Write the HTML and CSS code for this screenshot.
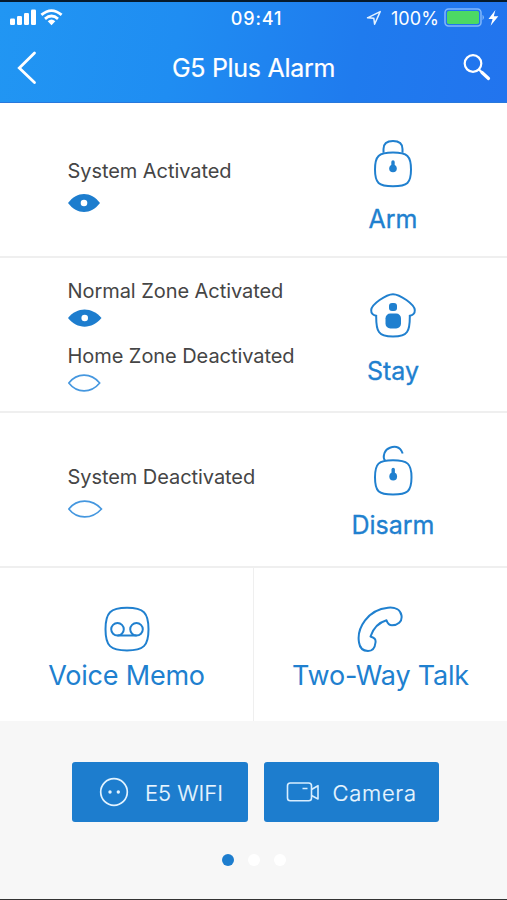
FILE: index.html
```html
<!DOCTYPE html>
<html lang="en">
<head>
<meta charset="utf-8">
<title>G5 Plus Alarm</title>
<link rel="stylesheet" href="styles.css">
</head>
<body>
<div class="app">
  <header class="header">
    <div class="status">
      <div class="status-left">
        <svg width="54" height="18" viewBox="0 0 54 18" fill="#fff">
          <rect x="0" y="9.5" width="5" height="6.5" rx="1.2"/><rect x="7" y="7" width="5" height="9" rx="1.2"/><rect x="14" y="4" width="5" height="12" rx="1.2"/><rect x="21" y="0.5" width="5" height="15.5" rx="1.2"/>
          <g fill="none" stroke="#fff" stroke-width="2.8"><path d="M31.4 5.9Q41.5 -2.7 51.6 5.9"/><path d="M35 9.9Q41.5 4.2 48 9.9"/></g>
          <path d="M37.7 12.2Q41.5 9 45.3 12.2L41.5 16.2Z"/>
        </svg>
      </div>
      <div class="time">09:41</div>
      <div class="status-right">
        <svg width="16" height="16" viewBox="0 0 16 16" fill="none" stroke="#e4f2ff" stroke-width="1.5" stroke-linejoin="round"><path d="M1.5 7.8L14.2 1.6L8.6 14.2L7.8 8.2Z"/></svg>
        <span class="percent">100%</span>
        <svg class="battery" width="42" height="20" viewBox="0 0 42 20"><rect x="1" y="1" width="36" height="17" rx="3.5" fill="none" stroke="#83b8fa" stroke-width="1.5"/><rect x="3" y="3" width="32" height="13" rx="1.8" fill="#4cd964"/><path d="M38.5 6.8Q41.5 9.5 38.5 12.2Z" fill="#83b8fa"/></svg>
        <svg width="11" height="16" viewBox="0 0 11 16" fill="#fff"><path d="M7.4 0L0.5 9H4.6L2.6 15.8L10.3 6.3H5.8Z"/></svg>
      </div>
    </div>
    <div class="nav">
      <svg class="back" width="22" height="36" viewBox="0 0 22 36" fill="none" stroke="#fff" stroke-width="2.8" stroke-linecap="round" stroke-linejoin="miter"><path d="M18.5 3L3.3 18L18.5 32.5"/></svg>
      <h1>G5 Plus Alarm</h1>
      <svg class="search" width="30" height="30" viewBox="0 0 30 30" fill="none" stroke="#fff" stroke-linecap="round"><circle cx="11" cy="10.5" r="8.3" stroke-width="2.2"/><path d="M17 16.500L20 19.500" stroke-width="2.2"/><path d="M20 19.500L26.500 25.500" stroke-width="3.200"/></svg>
    </div>
  </header>

  <section class="row">
    <div class="info">
      <div class="state"><span>System Activated</span>
        <svg width="33" height="20" viewBox="0 0 33 20"><path d="M0 10C9 -2 23 -2 32 10C23 22 9 22 0 10Z" fill="#1d7dce"/><circle cx="16" cy="10" r="3.3" fill="#fff"/></svg></div>
    </div>
    <div class="action">
      <svg width="48" height="52" viewBox="0 0 48 52" fill="none" stroke="#2080cf" stroke-width="2"><path d="M14.500 14.800V11Q14.500 3 24 3Q33.500 3 33.500 11V14.800"/><path d="M24 14.500C38.500 14.500 42 18 42 31.500C42 45 38.500 48.200 24 48.200C9.500 48.200 6 45 6 31.500C6 18 9.500 14.500 24 14.500Z"/><path d="M24 24V31" stroke-width="3.400" stroke-linecap="round"/><circle cx="24" cy="30.500" r="3.800" fill="#2080cf" stroke="none"/></svg>
      <span>Arm</span>
    </div>
  </section>

  <section class="row">
    <div class="info two">
      <div class="state"><span>Normal Zone Activated</span>
        <svg width="34" height="20" viewBox="0 0 34 20"><path d="M0 10C9 -1.500 24 -1.500 33.500 10C24 21.500 9 21.500 0 10Z" fill="#1d7dce"/><circle cx="16.700" cy="10" r="3.300" fill="#fff"/></svg></div>
      <div class="state"><span>Home Zone Deactivated</span>
        <svg width="34" height="20" viewBox="0 0 34 20"><path d="M0.800 10C9 -0.500 23 -0.500 31.700 10C23 20.500 9 20.500 0.800 10Z" fill="none" stroke="#4597df" stroke-width="1.600"/></svg></div>
    </div>
    <div class="action stay">
      <svg width="48" height="52" viewBox="0 0 48 52" fill="none" stroke="#2080cf" stroke-width="2"><path d="M24 3.200C31 3.200 45.500 13.500 45.800 19C46 22.500 43.500 24.500 40.800 24.800C40.800 31 41 37 38 41C35.500 44.800 31 45.500 24 45.500C17 45.500 12.500 44.800 10 41C7 37 7.200 31 7.200 24.800C4.500 24.500 2 22.500 2.200 19C2.500 13.500 17 3.200 24 3.200Z"/><rect x="20" y="12" width="8" height="8" rx="3" fill="#2080cf" stroke="none"/><rect x="16.500" y="22.500" width="15.500" height="15" rx="4.800" fill="#2080cf" stroke="none"/></svg>
      <span>Stay</span>
    </div>
  </section>

  <section class="row">
    <div class="info single">
      <div class="state"><span>System Deactivated</span>
        <svg width="35" height="20" viewBox="0 0 35 20"><path d="M0.800 10C9 -0.500 24 -0.500 33.500 10C24 20.500 9 20.500 0.800 10Z" fill="none" stroke="#4597df" stroke-width="1.600"/></svg></div>
    </div>
    <div class="action disarm">
      <svg width="48" height="56" viewBox="0 0 48 56" fill="none" stroke="#2080cf" stroke-width="2"><path d="M16.200 17.500C14.500 16 14.500 13 15.500 10C17.500 4.500 24 3.500 27.500 4C31 4.700 32.500 7.200 33.700 10.500"/><path d="M24 17.300C38.500 17.300 42.500 20.500 42.500 34.300C42.500 48.500 38.500 51.500 24 51.500C9.500 51.500 6 48.500 6 34.300C6 20.500 9.500 17.300 24 17.300Z"/><path d="M24.200 26.500V33" stroke-width="3.400" stroke-linecap="round"/><circle cx="24.200" cy="33.500" r="3.900" fill="#2080cf" stroke="none"/></svg>
      <span>Disarm</span>
    </div>
  </section>

  <section class="tiles">
    <div class="tile">
      <svg width="48" height="48" viewBox="0 0 48 48" fill="none" stroke="#2080cf" stroke-width="2"><path d="M24 2.800C40.500 2.800 45.500 7.500 45.500 24.200C45.500 41 40.500 45.500 24 45.500C7.500 45.500 2.500 41 2.500 24.200C2.500 7.500 7.500 2.800 24 2.800Z"/><circle cx="14.500" cy="24.300" r="6.300"/><circle cx="33.500" cy="24.300" r="6.300"/><path d="M14.500 30.500H33.500"/></svg>
      <span>Voice Memo</span>
    </div>
    <div class="tile">
      <svg width="48" height="48" viewBox="0 0 48 48" fill="none" stroke="#2080cf" stroke-width="2" stroke-linejoin="round"><path d="M2 37.500C-0.500 23 11 4.500 31 2.700C38 2 43.500 4.500 44.500 10.500C45.500 17 40.500 20.300 35 20.300C32 20.300 30.500 18 29.500 15.300C22 17.500 16 24 13.500 31.500C17.500 33 19 34 18.500 37.500C18 42.500 15.500 46 11 46C6 45.800 2.700 42.500 2 37.500Z"/></svg>
      <span>Two-Way Talk</span>
    </div>
  </section>

  <footer class="footer">
    <div class="buttons">
      <div class="button">
        <svg width="30" height="30" viewBox="0 0 30 30" fill="none" stroke="#e2f3ff" stroke-width="1.700"><circle cx="15" cy="15" r="13.300"/><g fill="#e2f3ff" stroke="none"><circle cx="11" cy="15" r="1.700"/><circle cx="19.300" cy="15" r="1.700"/></g></svg>
        <span>E5 WIFI</span>
      </div>
      <div class="button camera">
        <svg width="34" height="24" viewBox="0 0 34 24" fill="none" stroke="#d8eeff" stroke-width="1.600" stroke-linejoin="round"><rect x="1.500" y="3" width="24" height="17.800" rx="2.800"/><path d="M25.500 9.500L32 5.700V19L25.500 15.500M16.500 8.500H21.500"/></svg>
        <span>Camera</span>
      </div>
    </div>
    <div class="dots"><i class="on"></i><i></i><i></i></div>
  </footer>
</div>
</body>
</html>
```
FILE: styles.css
```css
* { box-sizing: border-box; }
body { margin: 0; font-family: Inter, "Liberation Sans", sans-serif; background: #fff; }
svg { display: block; flex: none; }
span, h1 { white-space: nowrap; }
.app { width: 507px; height: 900px; display: flex; flex-direction: column; border-top: 2px solid #061a2c; border-bottom: 1px solid #333; }
.header { height: 101px; flex: none; color: #fff; background: linear-gradient(100deg, #2196f3 0%, #1f8df2 35%, #1f7bee 70%, #2274ee 100%); border-bottom: 1px solid #2878dc; }
.status { height: 32px; display: grid; grid-template-columns: 1fr auto 1fr; align-items: center; padding: 0 8px 0 10px; }
.time { font-size: 18px; font-weight: 500; letter-spacing: 0.9px; padding-left: 4px; }
.status-right { display: flex; align-items: center; justify-content: flex-end; }
.percent { font-size: 18px; letter-spacing: 0.1px; margin: 0 5px 0 9px; }
.battery { margin-right: 2px; }
.nav { height: 68px; display: grid; grid-template-columns: 60px 1fr 60px; align-items: center; }
.back { margin-left: 16px; }
.nav h1 { margin: 0; text-align: center; font-size: 25px; font-weight: 400; letter-spacing: -0.3px; -webkit-text-stroke: 0.2px currentColor; }
.search { margin-left: 15px; }
.row { height: 155px; flex: none; display: grid; grid-template-columns: minmax(0, 1fr) 228px; border-bottom: 2px solid #efefef; }
.info { padding: 55px 0 0 67.500px; color: #454545; }
.info.two { padding-top: 20px; display: flex; flex-direction: column; gap: 10px; }
.info.single { padding-top: 51px; }
.state { height: 55px; display: flex; flex-direction: column; font-size: 20px; letter-spacing: -0.06px; line-height: 26px; gap: 9px; }
.two .state { gap: 4px; }
.action { display: flex; flex-direction: column; align-items: center; padding-top: 35px; color: #2080cf; font-size: 25px; line-height: 30px; -webkit-text-stroke: 0.3px currentColor; }
.action svg { margin-bottom: 14px; }
.stay { padding-top: 33px; }
.stay svg { margin-bottom: 13px; }
.disarm { padding-top: 30px; }
.disarm svg { margin-bottom: 11px; }
.tiles { height: 153px; flex: none; display: grid; grid-template-columns: 253px 1fr; }
.tile { display: flex; flex-direction: column; align-items: center; padding-top: 37px; color: #2080cf; font-size: 27px; letter-spacing: -0.2px; line-height: 34px; gap: 6px; }
.tile + .tile { border-left: 1px solid #efefef; }
.footer { flex: 1; background: #f7f7f7; padding-top: 41px; }
.buttons { display: flex; justify-content: center; gap: 16px; padding-left: 4px; }
.button { width: 175.500px; height: 60px; border-radius: 3px; background: #1d7dce; color: #e9f6ff; display: flex; align-items: center; padding-left: 27px; gap: 16px; font-size: 22px; font-weight: 300; line-height: 28px; -webkit-text-stroke: 0.2px currentColor; }
.button span { padding-top: 2px; }
.camera { padding-left: 22px; gap: 13px; letter-spacing: 0.7px; }
.dots { display: flex; justify-content: center; gap: 14px; margin-top: 32px; }
.dots i { width: 12px; height: 12px; border-radius: 50%; background: #fff; }
.dots .on { background: #1d7dce; }
```
